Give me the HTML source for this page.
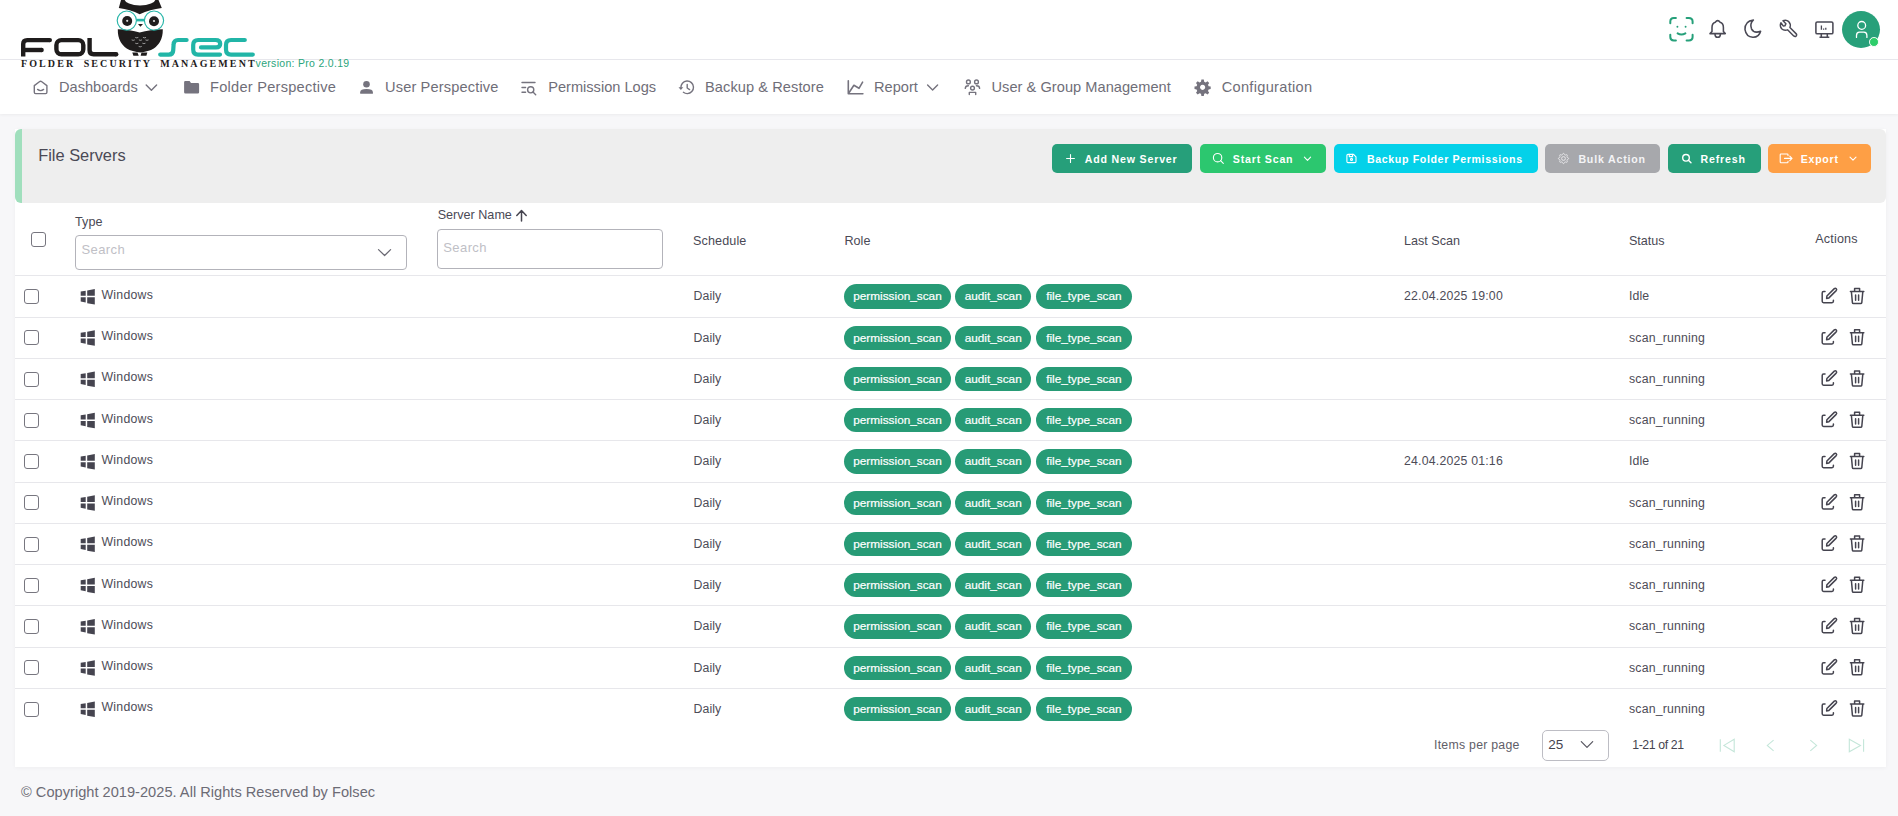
<!DOCTYPE html>
<html><head><meta charset="utf-8"><style>
*{box-sizing:border-box;margin:0;padding:0}
html,body{width:1898px;height:816px;overflow:hidden}
body{background:#f7f7f9;font-family:"Liberation Sans",sans-serif;position:relative;color:#45444f}
.abs{position:absolute}
svg{position:absolute;overflow:visible}
#hdr{position:absolute;left:0;top:0;width:1898px;height:60px;background:#fff;border-bottom:1px solid #e9e9ee}
#nav{position:absolute;left:0;top:60px;width:1898px;height:54px;background:#fff;box-shadow:0 1px 3px rgba(0,0,0,0.05)}
.nt{position:absolute;top:79px;font-size:14.6px;color:#6f6e78;white-space:nowrap;line-height:17px}
#card{position:absolute;left:15px;top:129px;width:1871px;height:638px;background:#fff;border-radius:0;box-shadow:0 1px 4px rgba(0,0,0,0.04)}
#ch{position:absolute;left:15px;top:129px;width:1871px;height:74px;background:#eeeeee;border-left:7px solid #a0dfbd;border-radius:6px}
.btn{position:absolute;top:144px;height:29px;border-radius:5px;color:#fff;font-weight:700;font-size:11px;letter-spacing:0.6px;white-space:nowrap;line-height:29px}
.btn span{position:absolute;top:0}
.hl{position:absolute;font-size:12.6px;color:#4a4955;white-space:nowrap;line-height:15px}
.row{position:absolute;left:15px;width:1871px;height:42px;border-top:1px solid #e6e6ea}
.cell{position:absolute;font-size:12.6px;color:#45444f;white-space:nowrap;line-height:15px}
.chip{position:absolute;height:24.3px;border-radius:13px;-webkit-text-stroke:0.2px #fff;background:#279b76;color:#fff;font-size:11.8px;line-height:25px;text-align:center;white-space:nowrap}
.cb{position:absolute;width:15px;height:15px;border:1.5px solid #77767f;border-radius:3px;background:#fff}
.bt{position:absolute;top:153.2px;font-size:10.6px;line-height:12px;font-weight:700;color:#fff;letter-spacing:0.82px;white-space:nowrap}
</style></head><body>
<div id="hdr"></div>
<div id="nav"></div>
<svg width="260" height="70" style="left:0;top:0" viewBox="0 0 260 70">
 <g fill="none" stroke="#1f1c1c" stroke-width="4.4" stroke-linecap="butt" stroke-linejoin="round">
  <path d="M49.8 40.1H27.2Q23.2 40.1 23.2 44.1V56.6"/>
  <path d="M23.2 50H41.6"/>
  <rect x="56.4" y="40.1" width="26.9" height="14.2" rx="5"/>
  <path d="M89.6 37.9V50.3Q89.6 54.3 93.6 54.3H116.2"/>
 </g>
 <g fill="#1f1c1c"><circle cx="49.8" cy="40.1" r="2.2"/><circle cx="41.6" cy="50" r="2.2"/><circle cx="116.2" cy="54.3" r="2.2"/></g>
 <g fill="none" stroke="#21b5a7" stroke-width="4.2" stroke-linecap="round" stroke-linejoin="round">
  <path d="M186.6 40H178Q173.8 40 173.6 44.5L173.2 50.5Q173 54.6 168.8 54.6H160.2"/>
  <path d="M220 54.6H198Q193.2 54.6 193.2 49.6V45Q193.2 40 198.2 40H215.6Q220.2 40 220.2 43.7Q220.2 47.4 216 47.4H201"/>
  <path d="M244.8 40H231Q226 40 226 45V49.6Q226 54.6 231 54.6H252.8"/>
 </g>
 <!-- owl -->
 <g fill="#1f1c1c">
  <path d="M121 0H158.5L161.8 8.1Q150 9.5 139.7 14.3Q130 9.5 118.8 8.1Z"/>
  <ellipse cx="140" cy="-1" rx="15.5" ry="6.5" fill="#fff"/>
  <path d="M117.8 29.2Q130 29.5 139.7 32.6Q150 29.5 162.8 29.2Q163 44 151 50Q144 52.4 140.3 52.5Q136.5 52.4 129.5 50Q117.5 44 117.8 29.2Z"/>
  <circle cx="127.2" cy="21" r="5"/>
  <circle cx="154" cy="21.2" r="5"/>
  <path d="M138 23.9H143L140.4 26.8Z"/>
  <path d="M132.3 52.4H137.5L138.7 55.8H133.4Z"/>
  <path d="M141.5 52.4H147.3L146.4 55.8H140.6Z"/>
 </g>
 <circle cx="127.2" cy="20.8" r="1.1" fill="#ddd"/>
 <circle cx="154" cy="21" r="1.1" fill="#ddd"/>
 <g fill="none" stroke="#27b5a8" stroke-width="1.15">
  <circle cx="126.8" cy="20.6" r="9.6"/>
  <circle cx="154" cy="20.6" r="9.6"/>
 </g>
 <path d="M136.4 18.8H144.4V21.4H136.4Z" fill="#27b5a8"/>
 <g stroke="#fff" stroke-width="0.55" fill="none" stroke-linecap="round"><path d="M135.6 37.6q1.2 .7 2.4 0M143.3 37.6q1.2 .7 2.4 0M132 40.1q1.2 .7 2.4 0M139.2 40.1q1.2 .7 2.4 0M145.8 40.1q1.2 .7 2.4 0M135.6 43.4q1.2 .7 2.4 0M142.7 43.4q1.2 .7 2.4 0M139 46.6q1.2 .7 2.4 0"/></g>
</svg>
<div class="abs" style="left:21px;top:58px;font-family:'Liberation Serif',serif;font-weight:700;font-size:10px;letter-spacing:2.1px;word-spacing:3.8px;color:#1f1c1c;line-height:11px;white-space:nowrap">FOLDER SECURITY MANAGEMENT</div>
<div class="abs" style="left:255.6px;top:57.3px;font-size:10.5px;letter-spacing:0.3px;color:#2aa57c;line-height:12px;white-space:nowrap">version: Pro 2.0.19</div>
<!-- face id -->
<svg width="26" height="26" style="left:1669px;top:17px" viewBox="0 0 26 26">
 <g fill="none" stroke="#26a07a" stroke-width="2" stroke-linecap="round">
  <path d="M1.3 6.3V4.6Q1.3 1.1 4.8 1.1H6.9"/>
  <path d="M17.6 1.1H19.8Q23.6 1.1 23.6 4.6V6.3"/>
  <path d="M23.6 17.8V20.1Q23.6 23.5 19.8 23.5H17.6"/>
  <path d="M6.9 23.5H4.8Q1.3 23.5 1.3 20.1V17.8"/>
  <path d="M8.6 16.4Q12.4 18.7 16.4 16.4"/>
 </g>
 <circle cx="8.4" cy="9.7" r="0.95" fill="#26a07a"/>
 <circle cx="16.6" cy="9.7" r="0.95" fill="#26a07a"/>
</svg>
<!-- bell -->
<svg width="18" height="20" style="left:1709px;top:19px" viewBox="0 0 18 20">
 <g fill="none" stroke="#4a4955" stroke-width="1.55" stroke-linejoin="round">
  <path d="M1 14.6H16.3L14.4 12.4V8.4Q14.4 4.2 11 3.2Q10 1.6 8.7 1.6Q7.4 1.6 6.4 3.2Q3 4.2 3 8.4V12.4Z"/>
  <path d="M6 14.9Q6 18.3 8.7 18.3Q11.4 18.3 11.4 14.9"/>
 </g>
</svg>
<!-- moon -->
<svg width="20" height="20" style="left:1744px;top:19px" viewBox="0 0 20 20">
 <path d="M9.4 1Q5.5 4.8 7.5 9.8Q10 14.8 16.6 12.3Q15 18.5 8.8 18.3Q2.2 17.8 1 10.6Q0.8 2 9.4 1Z" fill="none" stroke="#4a4955" stroke-width="1.55" stroke-linejoin="round"/>
</svg>
<!-- wrench -->
<svg width="20" height="20" style="left:1779.3px;top:18.9px" viewBox="0 0 20 20"><g transform="scale(0.95)">
 <path d="M2 4Q0.5 7.5 2.8 10.2Q5.3 12.7 9 11.4L15.5 17.8Q17 19 18.1 17.8Q19.2 16.7 17.9 15.4L11.5 9Q12.8 5.3 10.3 2.8Q7.6 0.3 4.2 1.8L7.3 4.9L6.2 7.2L4.4 7.3Z" fill="none" stroke="#4a4955" stroke-width="1.55" stroke-linejoin="round"/>
</g></svg>
<!-- monitor -->
<svg width="20" height="18" style="left:1815px;top:20.5px" viewBox="0 0 20 18">
 <g fill="none" stroke="#4a4955" stroke-width="1.55" stroke-linejoin="round">
  <rect x="0.9" y="0.9" width="17" height="11.9" rx="1.4"/>
  <path d="M6.3 12.8V16.3M12.3 12.8V16.3M4.5 16.3H14.3"/>
  <path d="M6.4 4.5V8.8M8.6 7.6V8.8M10.8 6.8V8.8" stroke-width="1.3"/>
 </g>
</svg>
<!-- avatar -->
<div class="abs" style="left:1842px;top:11px;width:38px;height:37px;border-radius:50%;background:#28a07a"></div>
<svg width="16" height="20" style="left:1853px;top:20px" viewBox="0 0 16 20">
 <g fill="none" stroke="#fff" stroke-width="1.3" stroke-linecap="round">
  <circle cx="8.7" cy="5.4" r="3.9"/>
  <path d="M3.5 17.4V15.4Q3.5 12.2 6.5 12.2H10.9Q13.9 12.2 13.9 15.4V17.4"/>
 </g>
</svg>
<div class="abs" style="left:1869.2px;top:37px;width:9.8px;height:9.8px;border-radius:50%;background:#2dcd6a;border:1.3px solid #fff"></div>
<!-- nav icons -->
<svg width="20" height="20" style="left:0;top:0" viewBox="0 0 20 20"></svg>
<svg width="1898" height="114" style="left:0;top:0" viewBox="0 0 1898 114">
 <g fill="none" stroke="#75737e" stroke-width="1.4" stroke-linecap="round" stroke-linejoin="round">
  <path d="M39.4 81.7Q40.6 80.8 41.8 81.7L46.9 85.6V92.3Q46.9 93.6 45.6 93.6H35.6Q34.3 93.6 34.3 92.3V85.6Z"/>
  <path d="M37.6 89.4Q40.6 91.8 43.6 89.4"/>
  <path d="M146.2 85L151.4 90.2L156.6 85"/>
  <path d="M927.6 85L932.6 90L937.6 85"/>
  <path d="M522 82.5H535M522 87.5H525.6M522 92.3H525.6"/>
  <circle cx="530.7" cy="89.8" r="3.1"/>
  <path d="M533 92.1L535.7 94.7"/>
  <path d="M683.4 92.3Q685.3 93.7 687.4 93.6A6.3 6.3 0 1 0 680.9 87.8"/>
  <path d="M687.2 84.4V88L689.6 89.6"/>
  <path d="M848.3 80.8V93.8H862.9" stroke-width="1.6"/>
  <path d="M849.3 92.2L853.9 85.3L859 88.3L862.6 82.2" stroke-width="1.6"/>
  <circle cx="968.4" cy="81.9" r="1.9"/>
  <circle cx="976.5" cy="81.9" r="1.9"/>
  <circle cx="972.5" cy="88.1" r="1.9"/>
  <path d="M965.3 88.4Q965.3 85.7 968.4 85.7M976.4 85.7Q979.6 85.7 979.6 88.4M969.3 94.6V92.4H975.7V94.6"/>
 </g>
 <g fill="#75737e">
  <path d="M181 0z"/>
  <path d="M184.1 82.3Q184.1 81.1 185.3 81.1H189.6L191 83H197.8Q199.1 83 199.1 84.3V92.3Q199.1 93.6 197.8 93.6H185.4Q184.1 93.6 184.1 92.3Z"/>
  <circle cx="366.5" cy="84.2" r="3.3"/>
  <path d="M360.2 93.8V92.2Q360.2 89.1 366.5 89.1Q372.9 89.1 372.9 92.2V93.8Z"/>
  <path fill-rule="evenodd" d="M1201.4 79.6h2.4l.4 2.1 1.5.7 1.8-1.2 1.7 1.7-1.2 1.8.6 1.5 2.1.4v2.4l-2.1.4-.6 1.5 1.2 1.8-1.7 1.7-1.8-1.2-1.5.6-.4 2.1h-2.4l-.4-2.1-1.5-.6-1.8 1.2-1.7-1.7 1.2-1.8-.6-1.5-2.1-.4v-2.4l2.1-.4.6-1.5-1.2-1.8 1.7-1.7 1.8 1.2 1.5-.7z M1202.6 84.7a2.6 2.6 0 1 0 0.01 0z"/>
 </g>
 <path d="M678.5 87.2H683.3L680.9 89.9Z" fill="#75737e"/>
</svg>
<div class="nt" style="left:59px;letter-spacing:0px">Dashboards</div>
<div class="nt" style="left:210px;letter-spacing:0.25px">Folder Perspective</div>
<div class="nt" style="left:385px;letter-spacing:0.15px">User Perspective</div>
<div class="nt" style="left:548.2px">Permission Logs</div>
<div class="nt" style="left:705px;letter-spacing:0.08px">Backup &amp; Restore</div>
<div class="nt" style="left:874px">Report</div>
<div class="nt" style="left:991.5px;letter-spacing:0.04px">User &amp; Group Management</div>
<div class="nt" style="left:1221.7px;letter-spacing:0.3px">Configuration</div>
<div id="card"></div>
<div id="ch"></div>
<div class="abs" style="left:38.2px;top:145.77px;font-size:16.4px;line-height:18.86px;color:#4a4955;letter-spacing:0px;white-space:nowrap;">File Servers</div>
<div class="btn" style="left:1052px;width:140px;background:#269f7a"></div>
<div class="btn" style="left:1200px;width:126px;background:#2cc76f"></div>
<div class="btn" style="left:1334px;width:204px;background:#04d1e9"></div>
<div class="btn" style="left:1545px;width:115px;background:#a7a8ac"></div>
<div class="btn" style="left:1668px;width:93px;background:#269f7a"></div>
<div class="btn" style="left:1768px;width:103px;background:#fe9f45"></div>
<svg width="1898" height="200" style="left:0;top:0" viewBox="0 0 1898 200">
 <g fill="none" stroke="#fff" stroke-width="1.1" stroke-linecap="round" stroke-linejoin="round">
  <path d="M1070.5 154.6V162.4M1066.6 158.5H1074.4"/>
  <circle cx="1217.6" cy="157.7" r="4.2"/>
  <path d="M1220.6 160.7L1223.3 163.3"/>
  <path d="M1304.4 157.2L1307.5 160.3L1310.6 157.2"/>
  <path d="M1348 154.4H1353.6L1356 156.8V161.5Q1356 162.6 1354.9 162.6H1348Q1346.9 162.6 1346.9 161.5V155.5Q1346.9 154.4 1348 154.4Z"/>
  <path d="M1349.3 154.4V156.6H1352.6V154.4"/>
  <circle cx="1351.5" cy="159.4" r="1"/>
  <circle cx="1686" cy="157.8" r="3.3" stroke-width="1.4"/>
  <path d="M1688.4 160.2L1691 162.8" stroke-width="1.4"/>
  <path d="M1788 155.6V154.8Q1788 154 1787.2 154H1781Q1780.2 154 1780.2 154.8V162Q1780.2 162.8 1781 162.8H1787.2Q1788 162.8 1788 162V161.2"/>
  <path d="M1784.5 158.4H1792M1789.8 156.2L1792 158.4L1789.8 160.6"/>
  <path d="M1850 157.2L1853 160.2L1856 157.2"/>
 </g>
 <g fill="none" stroke="#ececee" stroke-width="0.9">
  <circle cx="1563.5" cy="158.5" r="1.9"/>
  <path d="M1568.65 158.50L1568.54 158.83L1568.23 159.12L1567.82 159.36L1567.39 159.54L1567.05 159.71L1566.87 159.90L1566.86 160.16L1566.99 160.51L1567.16 160.94L1567.29 161.41L1567.30 161.83L1567.14 162.14L1566.83 162.30L1566.41 162.29L1565.94 162.16L1565.51 161.99L1565.16 161.86L1564.90 161.87L1564.71 162.05L1564.54 162.39L1564.36 162.82L1564.12 163.23L1563.83 163.54L1563.50 163.65L1563.17 163.54L1562.88 163.23L1562.64 162.82L1562.46 162.39L1562.29 162.05L1562.10 161.87L1561.84 161.86L1561.49 161.99L1561.06 162.16L1560.59 162.29L1560.17 162.30L1559.86 162.14L1559.70 161.83L1559.71 161.41L1559.84 160.94L1560.01 160.51L1560.14 160.16L1560.13 159.90L1559.95 159.71L1559.61 159.54L1559.18 159.36L1558.77 159.12L1558.46 158.83L1558.35 158.50L1558.46 158.17L1558.77 157.88L1559.18 157.64L1559.61 157.46L1559.95 157.29L1560.13 157.10L1560.14 156.84L1560.01 156.49L1559.84 156.06L1559.71 155.59L1559.70 155.17L1559.86 154.86L1560.17 154.70L1560.59 154.71L1561.06 154.84L1561.49 155.01L1561.84 155.14L1562.10 155.13L1562.29 154.95L1562.46 154.61L1562.64 154.18L1562.88 153.77L1563.17 153.46L1563.50 153.35L1563.83 153.46L1564.12 153.77L1564.36 154.18L1564.54 154.61L1564.71 154.95L1564.90 155.13L1565.16 155.14L1565.51 155.01L1565.94 154.84L1566.41 154.71L1566.83 154.70L1567.14 154.86L1567.30 155.17L1567.29 155.59L1567.16 156.06L1566.99 156.49L1566.86 156.84L1566.87 157.10L1567.05 157.29L1567.39 157.46L1567.82 157.64L1568.23 157.88L1568.54 158.17Z"/>
 </g>
</svg>
<div class="bt" style="left:1084.8px">Add New Server</div>
<div class="bt" style="left:1232.8px">Start Scan</div>
<div class="bt" style="left:1366.9px;letter-spacing:0.65px">Backup Folder Permissions</div>
<div class="bt" style="left:1578.4px;color:#f4f4f6">Bulk Action</div>
<div class="bt" style="left:1700.6px">Refresh</div>
<div class="bt" style="left:1800.7px;letter-spacing:0.74px">Export</div>
<div class="cb" style="left:31px;top:232px"></div>
<div class="hl" style="left:75.1px;top:215.4px">Type</div>
<div class="abs" style="left:75px;top:235px;width:332px;height:35px;border:1px solid #b3b3ba;border-radius:4px;background:#fff"></div>
<div class="abs" style="left:81.5px;top:242px;font-size:13px;line-height:15px;color:#c0c0c6;letter-spacing:0.4px;white-space:nowrap">Search</div>
<div class="hl" style="left:437.7px;top:208px">Server Name</div>
<div class="abs" style="left:437px;top:229px;width:226px;height:40px;border:1px solid #b3b3ba;border-radius:4px;background:#fff"></div>
<div class="abs" style="left:443.3px;top:239.6px;font-size:13px;line-height:15px;color:#c0c0c6;letter-spacing:0.4px;white-space:nowrap">Search</div>
<div class="hl" style="left:693.1px;top:234px;letter-spacing:0.1px">Schedule</div>
<div class="hl" style="left:844.5px;top:234px">Role</div>
<div class="hl" style="left:1404px;top:233.5px">Last Scan</div>
<div class="hl" style="left:1628.9px;top:233.5px">Status</div>
<div class="hl" style="left:1815.3px;top:231.5px;letter-spacing:0.15px">Actions</div>
<svg width="1898" height="300" style="left:0;top:0" viewBox="0 0 1898 300">
 <g fill="none" stroke="#45444f" stroke-width="1.3" stroke-linecap="round" stroke-linejoin="round">
  <path d="M378.5 249.6L384.6 255.5L390.6 249.6" stroke="#6a6973" stroke-width="1.25"/>
  <path d="M521.5 221V210.8M516.8 215.4L521.5 210.6L526.2 215.4" stroke-width="1.5"/>
 </g>
</svg>
<div class="abs" style="left:15px;top:275px;width:1871px;height:1px;background:#e7e7eb"></div>
<div class="cb" style="left:24px;top:289.00px"></div>
<div class="abs" style="left:101.4px;top:287.83px;font-size:12.3px;line-height:14.14px;color:#4d4c57;letter-spacing:0.27px;white-space:nowrap;">Windows</div>
<div class="abs" style="left:693.6px;top:289.33px;font-size:12.3px;line-height:14.14px;color:#4d4c57;letter-spacing:0.05px;white-space:nowrap;">Daily</div>
<div class="chip" style="left:844.1px;top:284.40px;width:106.8px">permission_scan</div>
<div class="chip" style="left:955px;top:284.40px;width:76.4px">audit_scan</div>
<div class="chip" style="left:1035.8px;top:284.40px;width:96.2px">file_type_scan</div>
<div class="abs" style="left:1404px;top:289.33px;font-size:12.3px;line-height:14.14px;color:#4d4c57;letter-spacing:0.2px;white-space:nowrap;">22.04.2025 19:00</div>
<div class="abs" style="left:1629px;top:289.33px;font-size:12.3px;line-height:14.14px;color:#4d4c57;letter-spacing:0.1px;white-space:nowrap;">Idle</div>
<div class="abs" style="left:15px;top:317px;width:1871px;height:1px;background:#e7e7eb"></div>
<div class="cb" style="left:24px;top:330.25px"></div>
<div class="abs" style="left:101.4px;top:329.08px;font-size:12.3px;line-height:14.14px;color:#4d4c57;letter-spacing:0.27px;white-space:nowrap;">Windows</div>
<div class="abs" style="left:693.6px;top:330.58px;font-size:12.3px;line-height:14.14px;color:#4d4c57;letter-spacing:0.05px;white-space:nowrap;">Daily</div>
<div class="chip" style="left:844.1px;top:325.65px;width:106.8px">permission_scan</div>
<div class="chip" style="left:955px;top:325.65px;width:76.4px">audit_scan</div>
<div class="chip" style="left:1035.8px;top:325.65px;width:96.2px">file_type_scan</div>
<div class="abs" style="left:1629px;top:330.58px;font-size:12.3px;line-height:14.14px;color:#4d4c57;letter-spacing:0.18px;white-space:nowrap;">scan_running</div>
<div class="abs" style="left:15px;top:358px;width:1871px;height:1px;background:#e7e7eb"></div>
<div class="cb" style="left:24px;top:371.50px"></div>
<div class="abs" style="left:101.4px;top:370.33px;font-size:12.3px;line-height:14.14px;color:#4d4c57;letter-spacing:0.27px;white-space:nowrap;">Windows</div>
<div class="abs" style="left:693.6px;top:371.83px;font-size:12.3px;line-height:14.14px;color:#4d4c57;letter-spacing:0.05px;white-space:nowrap;">Daily</div>
<div class="chip" style="left:844.1px;top:366.90px;width:106.8px">permission_scan</div>
<div class="chip" style="left:955px;top:366.90px;width:76.4px">audit_scan</div>
<div class="chip" style="left:1035.8px;top:366.90px;width:96.2px">file_type_scan</div>
<div class="abs" style="left:1629px;top:371.83px;font-size:12.3px;line-height:14.14px;color:#4d4c57;letter-spacing:0.18px;white-space:nowrap;">scan_running</div>
<div class="abs" style="left:15px;top:399px;width:1871px;height:1px;background:#e7e7eb"></div>
<div class="cb" style="left:24px;top:412.75px"></div>
<div class="abs" style="left:101.4px;top:411.58px;font-size:12.3px;line-height:14.14px;color:#4d4c57;letter-spacing:0.27px;white-space:nowrap;">Windows</div>
<div class="abs" style="left:693.6px;top:413.08px;font-size:12.3px;line-height:14.14px;color:#4d4c57;letter-spacing:0.05px;white-space:nowrap;">Daily</div>
<div class="chip" style="left:844.1px;top:408.15px;width:106.8px">permission_scan</div>
<div class="chip" style="left:955px;top:408.15px;width:76.4px">audit_scan</div>
<div class="chip" style="left:1035.8px;top:408.15px;width:96.2px">file_type_scan</div>
<div class="abs" style="left:1629px;top:413.08px;font-size:12.3px;line-height:14.14px;color:#4d4c57;letter-spacing:0.18px;white-space:nowrap;">scan_running</div>
<div class="abs" style="left:15px;top:440px;width:1871px;height:1px;background:#e7e7eb"></div>
<div class="cb" style="left:24px;top:454.00px"></div>
<div class="abs" style="left:101.4px;top:452.83px;font-size:12.3px;line-height:14.14px;color:#4d4c57;letter-spacing:0.27px;white-space:nowrap;">Windows</div>
<div class="abs" style="left:693.6px;top:454.33px;font-size:12.3px;line-height:14.14px;color:#4d4c57;letter-spacing:0.05px;white-space:nowrap;">Daily</div>
<div class="chip" style="left:844.1px;top:449.40px;width:106.8px">permission_scan</div>
<div class="chip" style="left:955px;top:449.40px;width:76.4px">audit_scan</div>
<div class="chip" style="left:1035.8px;top:449.40px;width:96.2px">file_type_scan</div>
<div class="abs" style="left:1404px;top:454.33px;font-size:12.3px;line-height:14.14px;color:#4d4c57;letter-spacing:0.2px;white-space:nowrap;">24.04.2025 01:16</div>
<div class="abs" style="left:1629px;top:454.33px;font-size:12.3px;line-height:14.14px;color:#4d4c57;letter-spacing:0.1px;white-space:nowrap;">Idle</div>
<div class="abs" style="left:15px;top:482px;width:1871px;height:1px;background:#e7e7eb"></div>
<div class="cb" style="left:24px;top:495.25px"></div>
<div class="abs" style="left:101.4px;top:494.08px;font-size:12.3px;line-height:14.14px;color:#4d4c57;letter-spacing:0.27px;white-space:nowrap;">Windows</div>
<div class="abs" style="left:693.6px;top:495.58px;font-size:12.3px;line-height:14.14px;color:#4d4c57;letter-spacing:0.05px;white-space:nowrap;">Daily</div>
<div class="chip" style="left:844.1px;top:490.65px;width:106.8px">permission_scan</div>
<div class="chip" style="left:955px;top:490.65px;width:76.4px">audit_scan</div>
<div class="chip" style="left:1035.8px;top:490.65px;width:96.2px">file_type_scan</div>
<div class="abs" style="left:1629px;top:495.58px;font-size:12.3px;line-height:14.14px;color:#4d4c57;letter-spacing:0.18px;white-space:nowrap;">scan_running</div>
<div class="abs" style="left:15px;top:523px;width:1871px;height:1px;background:#e7e7eb"></div>
<div class="cb" style="left:24px;top:536.50px"></div>
<div class="abs" style="left:101.4px;top:535.33px;font-size:12.3px;line-height:14.14px;color:#4d4c57;letter-spacing:0.27px;white-space:nowrap;">Windows</div>
<div class="abs" style="left:693.6px;top:536.83px;font-size:12.3px;line-height:14.14px;color:#4d4c57;letter-spacing:0.05px;white-space:nowrap;">Daily</div>
<div class="chip" style="left:844.1px;top:531.90px;width:106.8px">permission_scan</div>
<div class="chip" style="left:955px;top:531.90px;width:76.4px">audit_scan</div>
<div class="chip" style="left:1035.8px;top:531.90px;width:96.2px">file_type_scan</div>
<div class="abs" style="left:1629px;top:536.83px;font-size:12.3px;line-height:14.14px;color:#4d4c57;letter-spacing:0.18px;white-space:nowrap;">scan_running</div>
<div class="abs" style="left:15px;top:564px;width:1871px;height:1px;background:#e7e7eb"></div>
<div class="cb" style="left:24px;top:577.75px"></div>
<div class="abs" style="left:101.4px;top:576.58px;font-size:12.3px;line-height:14.14px;color:#4d4c57;letter-spacing:0.27px;white-space:nowrap;">Windows</div>
<div class="abs" style="left:693.6px;top:578.08px;font-size:12.3px;line-height:14.14px;color:#4d4c57;letter-spacing:0.05px;white-space:nowrap;">Daily</div>
<div class="chip" style="left:844.1px;top:573.15px;width:106.8px">permission_scan</div>
<div class="chip" style="left:955px;top:573.15px;width:76.4px">audit_scan</div>
<div class="chip" style="left:1035.8px;top:573.15px;width:96.2px">file_type_scan</div>
<div class="abs" style="left:1629px;top:578.08px;font-size:12.3px;line-height:14.14px;color:#4d4c57;letter-spacing:0.18px;white-space:nowrap;">scan_running</div>
<div class="abs" style="left:15px;top:605px;width:1871px;height:1px;background:#e7e7eb"></div>
<div class="cb" style="left:24px;top:619.00px"></div>
<div class="abs" style="left:101.4px;top:617.83px;font-size:12.3px;line-height:14.14px;color:#4d4c57;letter-spacing:0.27px;white-space:nowrap;">Windows</div>
<div class="abs" style="left:693.6px;top:619.33px;font-size:12.3px;line-height:14.14px;color:#4d4c57;letter-spacing:0.05px;white-space:nowrap;">Daily</div>
<div class="chip" style="left:844.1px;top:614.40px;width:106.8px">permission_scan</div>
<div class="chip" style="left:955px;top:614.40px;width:76.4px">audit_scan</div>
<div class="chip" style="left:1035.8px;top:614.40px;width:96.2px">file_type_scan</div>
<div class="abs" style="left:1629px;top:619.33px;font-size:12.3px;line-height:14.14px;color:#4d4c57;letter-spacing:0.18px;white-space:nowrap;">scan_running</div>
<div class="abs" style="left:15px;top:647px;width:1871px;height:1px;background:#e7e7eb"></div>
<div class="cb" style="left:24px;top:660.25px"></div>
<div class="abs" style="left:101.4px;top:659.08px;font-size:12.3px;line-height:14.14px;color:#4d4c57;letter-spacing:0.27px;white-space:nowrap;">Windows</div>
<div class="abs" style="left:693.6px;top:660.58px;font-size:12.3px;line-height:14.14px;color:#4d4c57;letter-spacing:0.05px;white-space:nowrap;">Daily</div>
<div class="chip" style="left:844.1px;top:655.65px;width:106.8px">permission_scan</div>
<div class="chip" style="left:955px;top:655.65px;width:76.4px">audit_scan</div>
<div class="chip" style="left:1035.8px;top:655.65px;width:96.2px">file_type_scan</div>
<div class="abs" style="left:1629px;top:660.58px;font-size:12.3px;line-height:14.14px;color:#4d4c57;letter-spacing:0.18px;white-space:nowrap;">scan_running</div>
<div class="abs" style="left:15px;top:688px;width:1871px;height:1px;background:#e7e7eb"></div>
<div class="cb" style="left:24px;top:701.50px"></div>
<div class="abs" style="left:101.4px;top:700.33px;font-size:12.3px;line-height:14.14px;color:#4d4c57;letter-spacing:0.27px;white-space:nowrap;">Windows</div>
<div class="abs" style="left:693.6px;top:701.83px;font-size:12.3px;line-height:14.14px;color:#4d4c57;letter-spacing:0.05px;white-space:nowrap;">Daily</div>
<div class="chip" style="left:844.1px;top:696.90px;width:106.8px">permission_scan</div>
<div class="chip" style="left:955px;top:696.90px;width:76.4px">audit_scan</div>
<div class="chip" style="left:1035.8px;top:696.90px;width:96.2px">file_type_scan</div>
<div class="abs" style="left:1629px;top:701.83px;font-size:12.3px;line-height:14.14px;color:#4d4c57;letter-spacing:0.18px;white-space:nowrap;">scan_running</div>
<svg width="1898" height="816" style="left:0;top:0" viewBox="0 0 1898 816"><g transform="translate(0,0.00)" fill="#45444f"><path d="M80.7 291.4L85.7 290.7V295.8H80.7Z"/><path d="M87.2 290.4L94.8 288.9V295.8H87.2Z"/><path d="M80.7 297.2H85.7V302.4L80.7 301.6Z"/><path d="M87.2 297.3H94.8V304.6L87.2 303.2Z"/></g><g transform="translate(0,0.00)" fill="none" stroke="#45444f" stroke-width="1.5" stroke-linecap="round" stroke-linejoin="round"><path d="M1825 291.6H1823.6Q1822.2 291.6 1822.2 293V301.3Q1822.2 302.7 1823.6 302.7H1832Q1833.4 302.7 1833.4 301.3V300.3"/><path d="M1826.6 298.4L1826.9 296L1834.3 288.6Q1835.4 287.8 1836.3 288.7Q1837.1 289.6 1836.2 290.6L1828.9 297.9Z"/><path d="M1850.4 291.6H1863.8M1854.6 291.4V288.6H1859.6V291.4M1851.4 291.8L1852.4 302.6Q1852.5 303.6 1853.5 303.6H1860.7Q1861.7 303.6 1861.8 302.6L1862.8 291.8M1855.6 295V300.3M1858.6 295V300.3"/></g><g transform="translate(0,41.25)" fill="#45444f"><path d="M80.7 291.4L85.7 290.7V295.8H80.7Z"/><path d="M87.2 290.4L94.8 288.9V295.8H87.2Z"/><path d="M80.7 297.2H85.7V302.4L80.7 301.6Z"/><path d="M87.2 297.3H94.8V304.6L87.2 303.2Z"/></g><g transform="translate(0,41.25)" fill="none" stroke="#45444f" stroke-width="1.5" stroke-linecap="round" stroke-linejoin="round"><path d="M1825 291.6H1823.6Q1822.2 291.6 1822.2 293V301.3Q1822.2 302.7 1823.6 302.7H1832Q1833.4 302.7 1833.4 301.3V300.3"/><path d="M1826.6 298.4L1826.9 296L1834.3 288.6Q1835.4 287.8 1836.3 288.7Q1837.1 289.6 1836.2 290.6L1828.9 297.9Z"/><path d="M1850.4 291.6H1863.8M1854.6 291.4V288.6H1859.6V291.4M1851.4 291.8L1852.4 302.6Q1852.5 303.6 1853.5 303.6H1860.7Q1861.7 303.6 1861.8 302.6L1862.8 291.8M1855.6 295V300.3M1858.6 295V300.3"/></g><g transform="translate(0,82.50)" fill="#45444f"><path d="M80.7 291.4L85.7 290.7V295.8H80.7Z"/><path d="M87.2 290.4L94.8 288.9V295.8H87.2Z"/><path d="M80.7 297.2H85.7V302.4L80.7 301.6Z"/><path d="M87.2 297.3H94.8V304.6L87.2 303.2Z"/></g><g transform="translate(0,82.50)" fill="none" stroke="#45444f" stroke-width="1.5" stroke-linecap="round" stroke-linejoin="round"><path d="M1825 291.6H1823.6Q1822.2 291.6 1822.2 293V301.3Q1822.2 302.7 1823.6 302.7H1832Q1833.4 302.7 1833.4 301.3V300.3"/><path d="M1826.6 298.4L1826.9 296L1834.3 288.6Q1835.4 287.8 1836.3 288.7Q1837.1 289.6 1836.2 290.6L1828.9 297.9Z"/><path d="M1850.4 291.6H1863.8M1854.6 291.4V288.6H1859.6V291.4M1851.4 291.8L1852.4 302.6Q1852.5 303.6 1853.5 303.6H1860.7Q1861.7 303.6 1861.8 302.6L1862.8 291.8M1855.6 295V300.3M1858.6 295V300.3"/></g><g transform="translate(0,123.75)" fill="#45444f"><path d="M80.7 291.4L85.7 290.7V295.8H80.7Z"/><path d="M87.2 290.4L94.8 288.9V295.8H87.2Z"/><path d="M80.7 297.2H85.7V302.4L80.7 301.6Z"/><path d="M87.2 297.3H94.8V304.6L87.2 303.2Z"/></g><g transform="translate(0,123.75)" fill="none" stroke="#45444f" stroke-width="1.5" stroke-linecap="round" stroke-linejoin="round"><path d="M1825 291.6H1823.6Q1822.2 291.6 1822.2 293V301.3Q1822.2 302.7 1823.6 302.7H1832Q1833.4 302.7 1833.4 301.3V300.3"/><path d="M1826.6 298.4L1826.9 296L1834.3 288.6Q1835.4 287.8 1836.3 288.7Q1837.1 289.6 1836.2 290.6L1828.9 297.9Z"/><path d="M1850.4 291.6H1863.8M1854.6 291.4V288.6H1859.6V291.4M1851.4 291.8L1852.4 302.6Q1852.5 303.6 1853.5 303.6H1860.7Q1861.7 303.6 1861.8 302.6L1862.8 291.8M1855.6 295V300.3M1858.6 295V300.3"/></g><g transform="translate(0,165.00)" fill="#45444f"><path d="M80.7 291.4L85.7 290.7V295.8H80.7Z"/><path d="M87.2 290.4L94.8 288.9V295.8H87.2Z"/><path d="M80.7 297.2H85.7V302.4L80.7 301.6Z"/><path d="M87.2 297.3H94.8V304.6L87.2 303.2Z"/></g><g transform="translate(0,165.00)" fill="none" stroke="#45444f" stroke-width="1.5" stroke-linecap="round" stroke-linejoin="round"><path d="M1825 291.6H1823.6Q1822.2 291.6 1822.2 293V301.3Q1822.2 302.7 1823.6 302.7H1832Q1833.4 302.7 1833.4 301.3V300.3"/><path d="M1826.6 298.4L1826.9 296L1834.3 288.6Q1835.4 287.8 1836.3 288.7Q1837.1 289.6 1836.2 290.6L1828.9 297.9Z"/><path d="M1850.4 291.6H1863.8M1854.6 291.4V288.6H1859.6V291.4M1851.4 291.8L1852.4 302.6Q1852.5 303.6 1853.5 303.6H1860.7Q1861.7 303.6 1861.8 302.6L1862.8 291.8M1855.6 295V300.3M1858.6 295V300.3"/></g><g transform="translate(0,206.25)" fill="#45444f"><path d="M80.7 291.4L85.7 290.7V295.8H80.7Z"/><path d="M87.2 290.4L94.8 288.9V295.8H87.2Z"/><path d="M80.7 297.2H85.7V302.4L80.7 301.6Z"/><path d="M87.2 297.3H94.8V304.6L87.2 303.2Z"/></g><g transform="translate(0,206.25)" fill="none" stroke="#45444f" stroke-width="1.5" stroke-linecap="round" stroke-linejoin="round"><path d="M1825 291.6H1823.6Q1822.2 291.6 1822.2 293V301.3Q1822.2 302.7 1823.6 302.7H1832Q1833.4 302.7 1833.4 301.3V300.3"/><path d="M1826.6 298.4L1826.9 296L1834.3 288.6Q1835.4 287.8 1836.3 288.7Q1837.1 289.6 1836.2 290.6L1828.9 297.9Z"/><path d="M1850.4 291.6H1863.8M1854.6 291.4V288.6H1859.6V291.4M1851.4 291.8L1852.4 302.6Q1852.5 303.6 1853.5 303.6H1860.7Q1861.7 303.6 1861.8 302.6L1862.8 291.8M1855.6 295V300.3M1858.6 295V300.3"/></g><g transform="translate(0,247.50)" fill="#45444f"><path d="M80.7 291.4L85.7 290.7V295.8H80.7Z"/><path d="M87.2 290.4L94.8 288.9V295.8H87.2Z"/><path d="M80.7 297.2H85.7V302.4L80.7 301.6Z"/><path d="M87.2 297.3H94.8V304.6L87.2 303.2Z"/></g><g transform="translate(0,247.50)" fill="none" stroke="#45444f" stroke-width="1.5" stroke-linecap="round" stroke-linejoin="round"><path d="M1825 291.6H1823.6Q1822.2 291.6 1822.2 293V301.3Q1822.2 302.7 1823.6 302.7H1832Q1833.4 302.7 1833.4 301.3V300.3"/><path d="M1826.6 298.4L1826.9 296L1834.3 288.6Q1835.4 287.8 1836.3 288.7Q1837.1 289.6 1836.2 290.6L1828.9 297.9Z"/><path d="M1850.4 291.6H1863.8M1854.6 291.4V288.6H1859.6V291.4M1851.4 291.8L1852.4 302.6Q1852.5 303.6 1853.5 303.6H1860.7Q1861.7 303.6 1861.8 302.6L1862.8 291.8M1855.6 295V300.3M1858.6 295V300.3"/></g><g transform="translate(0,288.75)" fill="#45444f"><path d="M80.7 291.4L85.7 290.7V295.8H80.7Z"/><path d="M87.2 290.4L94.8 288.9V295.8H87.2Z"/><path d="M80.7 297.2H85.7V302.4L80.7 301.6Z"/><path d="M87.2 297.3H94.8V304.6L87.2 303.2Z"/></g><g transform="translate(0,288.75)" fill="none" stroke="#45444f" stroke-width="1.5" stroke-linecap="round" stroke-linejoin="round"><path d="M1825 291.6H1823.6Q1822.2 291.6 1822.2 293V301.3Q1822.2 302.7 1823.6 302.7H1832Q1833.4 302.7 1833.4 301.3V300.3"/><path d="M1826.6 298.4L1826.9 296L1834.3 288.6Q1835.4 287.8 1836.3 288.7Q1837.1 289.6 1836.2 290.6L1828.9 297.9Z"/><path d="M1850.4 291.6H1863.8M1854.6 291.4V288.6H1859.6V291.4M1851.4 291.8L1852.4 302.6Q1852.5 303.6 1853.5 303.6H1860.7Q1861.7 303.6 1861.8 302.6L1862.8 291.8M1855.6 295V300.3M1858.6 295V300.3"/></g><g transform="translate(0,330.00)" fill="#45444f"><path d="M80.7 291.4L85.7 290.7V295.8H80.7Z"/><path d="M87.2 290.4L94.8 288.9V295.8H87.2Z"/><path d="M80.7 297.2H85.7V302.4L80.7 301.6Z"/><path d="M87.2 297.3H94.8V304.6L87.2 303.2Z"/></g><g transform="translate(0,330.00)" fill="none" stroke="#45444f" stroke-width="1.5" stroke-linecap="round" stroke-linejoin="round"><path d="M1825 291.6H1823.6Q1822.2 291.6 1822.2 293V301.3Q1822.2 302.7 1823.6 302.7H1832Q1833.4 302.7 1833.4 301.3V300.3"/><path d="M1826.6 298.4L1826.9 296L1834.3 288.6Q1835.4 287.8 1836.3 288.7Q1837.1 289.6 1836.2 290.6L1828.9 297.9Z"/><path d="M1850.4 291.6H1863.8M1854.6 291.4V288.6H1859.6V291.4M1851.4 291.8L1852.4 302.6Q1852.5 303.6 1853.5 303.6H1860.7Q1861.7 303.6 1861.8 302.6L1862.8 291.8M1855.6 295V300.3M1858.6 295V300.3"/></g><g transform="translate(0,371.25)" fill="#45444f"><path d="M80.7 291.4L85.7 290.7V295.8H80.7Z"/><path d="M87.2 290.4L94.8 288.9V295.8H87.2Z"/><path d="M80.7 297.2H85.7V302.4L80.7 301.6Z"/><path d="M87.2 297.3H94.8V304.6L87.2 303.2Z"/></g><g transform="translate(0,371.25)" fill="none" stroke="#45444f" stroke-width="1.5" stroke-linecap="round" stroke-linejoin="round"><path d="M1825 291.6H1823.6Q1822.2 291.6 1822.2 293V301.3Q1822.2 302.7 1823.6 302.7H1832Q1833.4 302.7 1833.4 301.3V300.3"/><path d="M1826.6 298.4L1826.9 296L1834.3 288.6Q1835.4 287.8 1836.3 288.7Q1837.1 289.6 1836.2 290.6L1828.9 297.9Z"/><path d="M1850.4 291.6H1863.8M1854.6 291.4V288.6H1859.6V291.4M1851.4 291.8L1852.4 302.6Q1852.5 303.6 1853.5 303.6H1860.7Q1861.7 303.6 1861.8 302.6L1862.8 291.8M1855.6 295V300.3M1858.6 295V300.3"/></g><g transform="translate(0,412.50)" fill="#45444f"><path d="M80.7 291.4L85.7 290.7V295.8H80.7Z"/><path d="M87.2 290.4L94.8 288.9V295.8H87.2Z"/><path d="M80.7 297.2H85.7V302.4L80.7 301.6Z"/><path d="M87.2 297.3H94.8V304.6L87.2 303.2Z"/></g><g transform="translate(0,412.50)" fill="none" stroke="#45444f" stroke-width="1.5" stroke-linecap="round" stroke-linejoin="round"><path d="M1825 291.6H1823.6Q1822.2 291.6 1822.2 293V301.3Q1822.2 302.7 1823.6 302.7H1832Q1833.4 302.7 1833.4 301.3V300.3"/><path d="M1826.6 298.4L1826.9 296L1834.3 288.6Q1835.4 287.8 1836.3 288.7Q1837.1 289.6 1836.2 290.6L1828.9 297.9Z"/><path d="M1850.4 291.6H1863.8M1854.6 291.4V288.6H1859.6V291.4M1851.4 291.8L1852.4 302.6Q1852.5 303.6 1853.5 303.6H1860.7Q1861.7 303.6 1861.8 302.6L1862.8 291.8M1855.6 295V300.3M1858.6 295V300.3"/></g></svg>
<div class="abs" style="left:1434px;top:738px;font-size:12.3px;line-height:14px;color:#5f5e68;white-space:nowrap;letter-spacing:0.26px">Items per page</div>
<div class="abs" style="left:1541.8px;top:730.4px;width:66.8px;height:30.4px;border:1px solid #bdbdc4;border-radius:5px;background:#fff"></div>
<div class="abs" style="left:1548.3px;top:736.5px;font-size:13.5px;line-height:16px;color:#45444f;white-space:nowrap">25</div>
<div class="abs" style="left:1632.2px;top:738px;font-size:12.3px;line-height:14px;color:#45444f;white-space:nowrap;letter-spacing:-0.4px">1-21 of 21</div>
<svg width="1898" height="816" style="left:0;top:0" viewBox="0 0 1898 816">
 <path d="M1581.3 741.6L1587 747.3L1592.7 741.6" fill="none" stroke="#55545e" stroke-width="1.2" stroke-linecap="round" stroke-linejoin="round"/>
 <g fill="none" stroke="#c4e6d9" stroke-width="1.1" stroke-linejoin="miter">
  <path d="M1720.3 739.2V751.7M1734.2 739.2L1723.9 745.4L1734.2 751.7Z"/>
  <path d="M1773.6 740.1L1767.3 745.4L1773.6 750.8"/>
  <path d="M1810.3 740.1L1816.6 745.4L1810.3 750.8"/>
  <path d="M1863.6 739.2V751.7M1849.3 739.2L1860.5 745.4L1849.3 751.7Z"/>
 </g>
</svg>
<div class="abs" style="left:21px;top:784.11px;font-size:14.6px;line-height:16.79px;color:#6c6b75;letter-spacing:0.02px;white-space:nowrap;">© Copyright 2019-2025. All Rights Reserved by Folsec</div>
</body></html>
